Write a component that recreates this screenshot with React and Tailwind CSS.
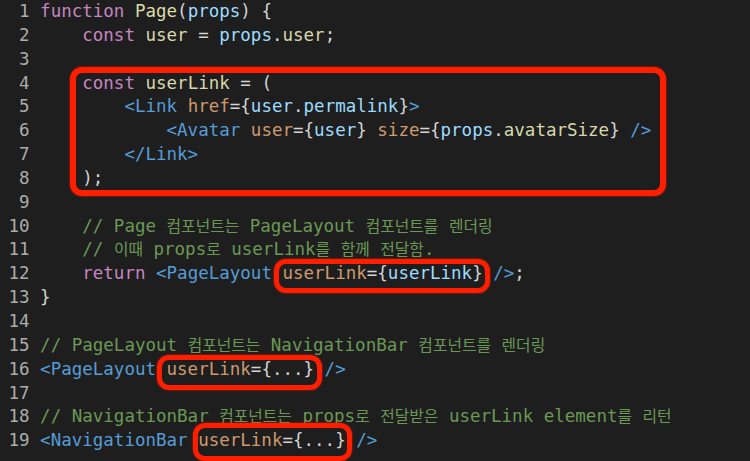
import React from 'react';

// token colours
const KW = 'text-[#c586c0]';
const FN = 'text-[#dcdcaa]';
const VAR = 'text-[#d8d8ac]';
const LB = 'text-[#9cdcfe]';
const TAG = 'text-[#569cd6]';
const ATTR = 'text-[#ce9a6e]';
const PUN = 'text-[#d4d4d4]';
const CMT = 'text-[#6a9955]';

const lines = [
    [['function ', KW], ['Page', FN], ['(', PUN], ['props', LB], [') {', PUN]],
    [['    '], ['const ', KW], ['user', VAR], [' = ', PUN], ['props', LB], ['.', PUN], ['user', VAR], [';', PUN]],
    [],
    [['    '], ['const ', KW], ['userLink', VAR], [' = (', PUN]],
    [['        '], ['<Link ', TAG], ['href', ATTR], ['={', PUN], ['user', LB], ['.', PUN], ['permalink', LB], ['}', PUN], ['>', TAG]],
    [['            '], ['<Avatar ', TAG], ['user', ATTR], ['={', PUN], ['user', LB], ['} ', PUN], ['size', ATTR], ['={', PUN], ['props', LB], ['.', PUN], ['avatarSize', VAR], ['} ', PUN], ['/>', TAG]],
    [['        '], ['</Link>', TAG]],
    [['    '], [');', PUN]],
    [],
    [['    '], ['// Page 컴포넌트는 PageLayout 컴포넌트를 렌더링', CMT]],
    [['    '], ['// 이때 props로 userLink를 함께 전달함.', CMT]],
    [['    '], ['return ', KW], ['<PageLayout ', TAG], ['userLink', ATTR], ['={', PUN], ['userLink', LB], ['} ', PUN], ['/>', TAG], [';', PUN]],
    [['}', PUN]],
    [],
    [['// PageLayout 컴포넌트는 NavigationBar 컴포넌트를 렌더링', CMT]],
    [['<PageLayout ', TAG], ['userLink', ATTR], ['={...} ', PUN], ['/>', TAG]],
    [],
    [['// NavigationBar 컴포넌트는 props로 전달받은 userLink element를 리턴', CMT]],
    [['<NavigationBar ', TAG], ['userLink', ATTR], ['={...} ', PUN], ['/>', TAG]],
];

// hangul glyphs in the editor are narrower than a full em
const Text = ({ text }) =>
    text.split(/([\uac00-\ud7a3]+)/).map((part, i) =>
        /[\uac00-\ud7a3]/.test(part)
            ? <span key={i} className="text-[15.8px]">{part}</span>
            : part
    );

// red hand-drawn marks laid over the code
const Mark = ({ className }) => (
    <div className={`absolute border-[#ff1e00] rounded-[12px] shadow-[0_0_2px_#ff1e00] ${className}`} />
);

export default function App() {
    return (
        <div className="relative w-[750px] h-[461px] overflow-hidden bg-[#1e1e1e] pl-[8.5px] text-[17.5px] leading-[23.85px] whitespace-pre" style={{ fontFamily: '"DejaVu Sans Mono", "Noto Sans CJK KR", monospace' }}>
            {lines.map((tokens, i) => (
                <div key={i} className="flex h-[23.85px]">
                    <span className="text-[#acacac]">{String(i + 1).padStart(2, ' ') + ' '}</span>
                    <span className={PUN}>
                        {tokens.map(([t, c], j) => (
                            <span key={j} className={c}><Text text={t} /></span>
                        ))}
                    </span>
                </div>
            ))}
            <Mark className="left-[70px] top-[67px] w-[596px] h-[129px] border-[6px]" />
            <Mark className="left-[274px] top-[259px] w-[216px] h-[34px] border-[5px]" />
            <Mark className="left-[157px] top-[355px] w-[165px] h-[35px] border-[5px]" />
            <Mark className="left-[193px] top-[423px] w-[159px] h-[38px] border-[5px]" />
        </div>
    );
}
